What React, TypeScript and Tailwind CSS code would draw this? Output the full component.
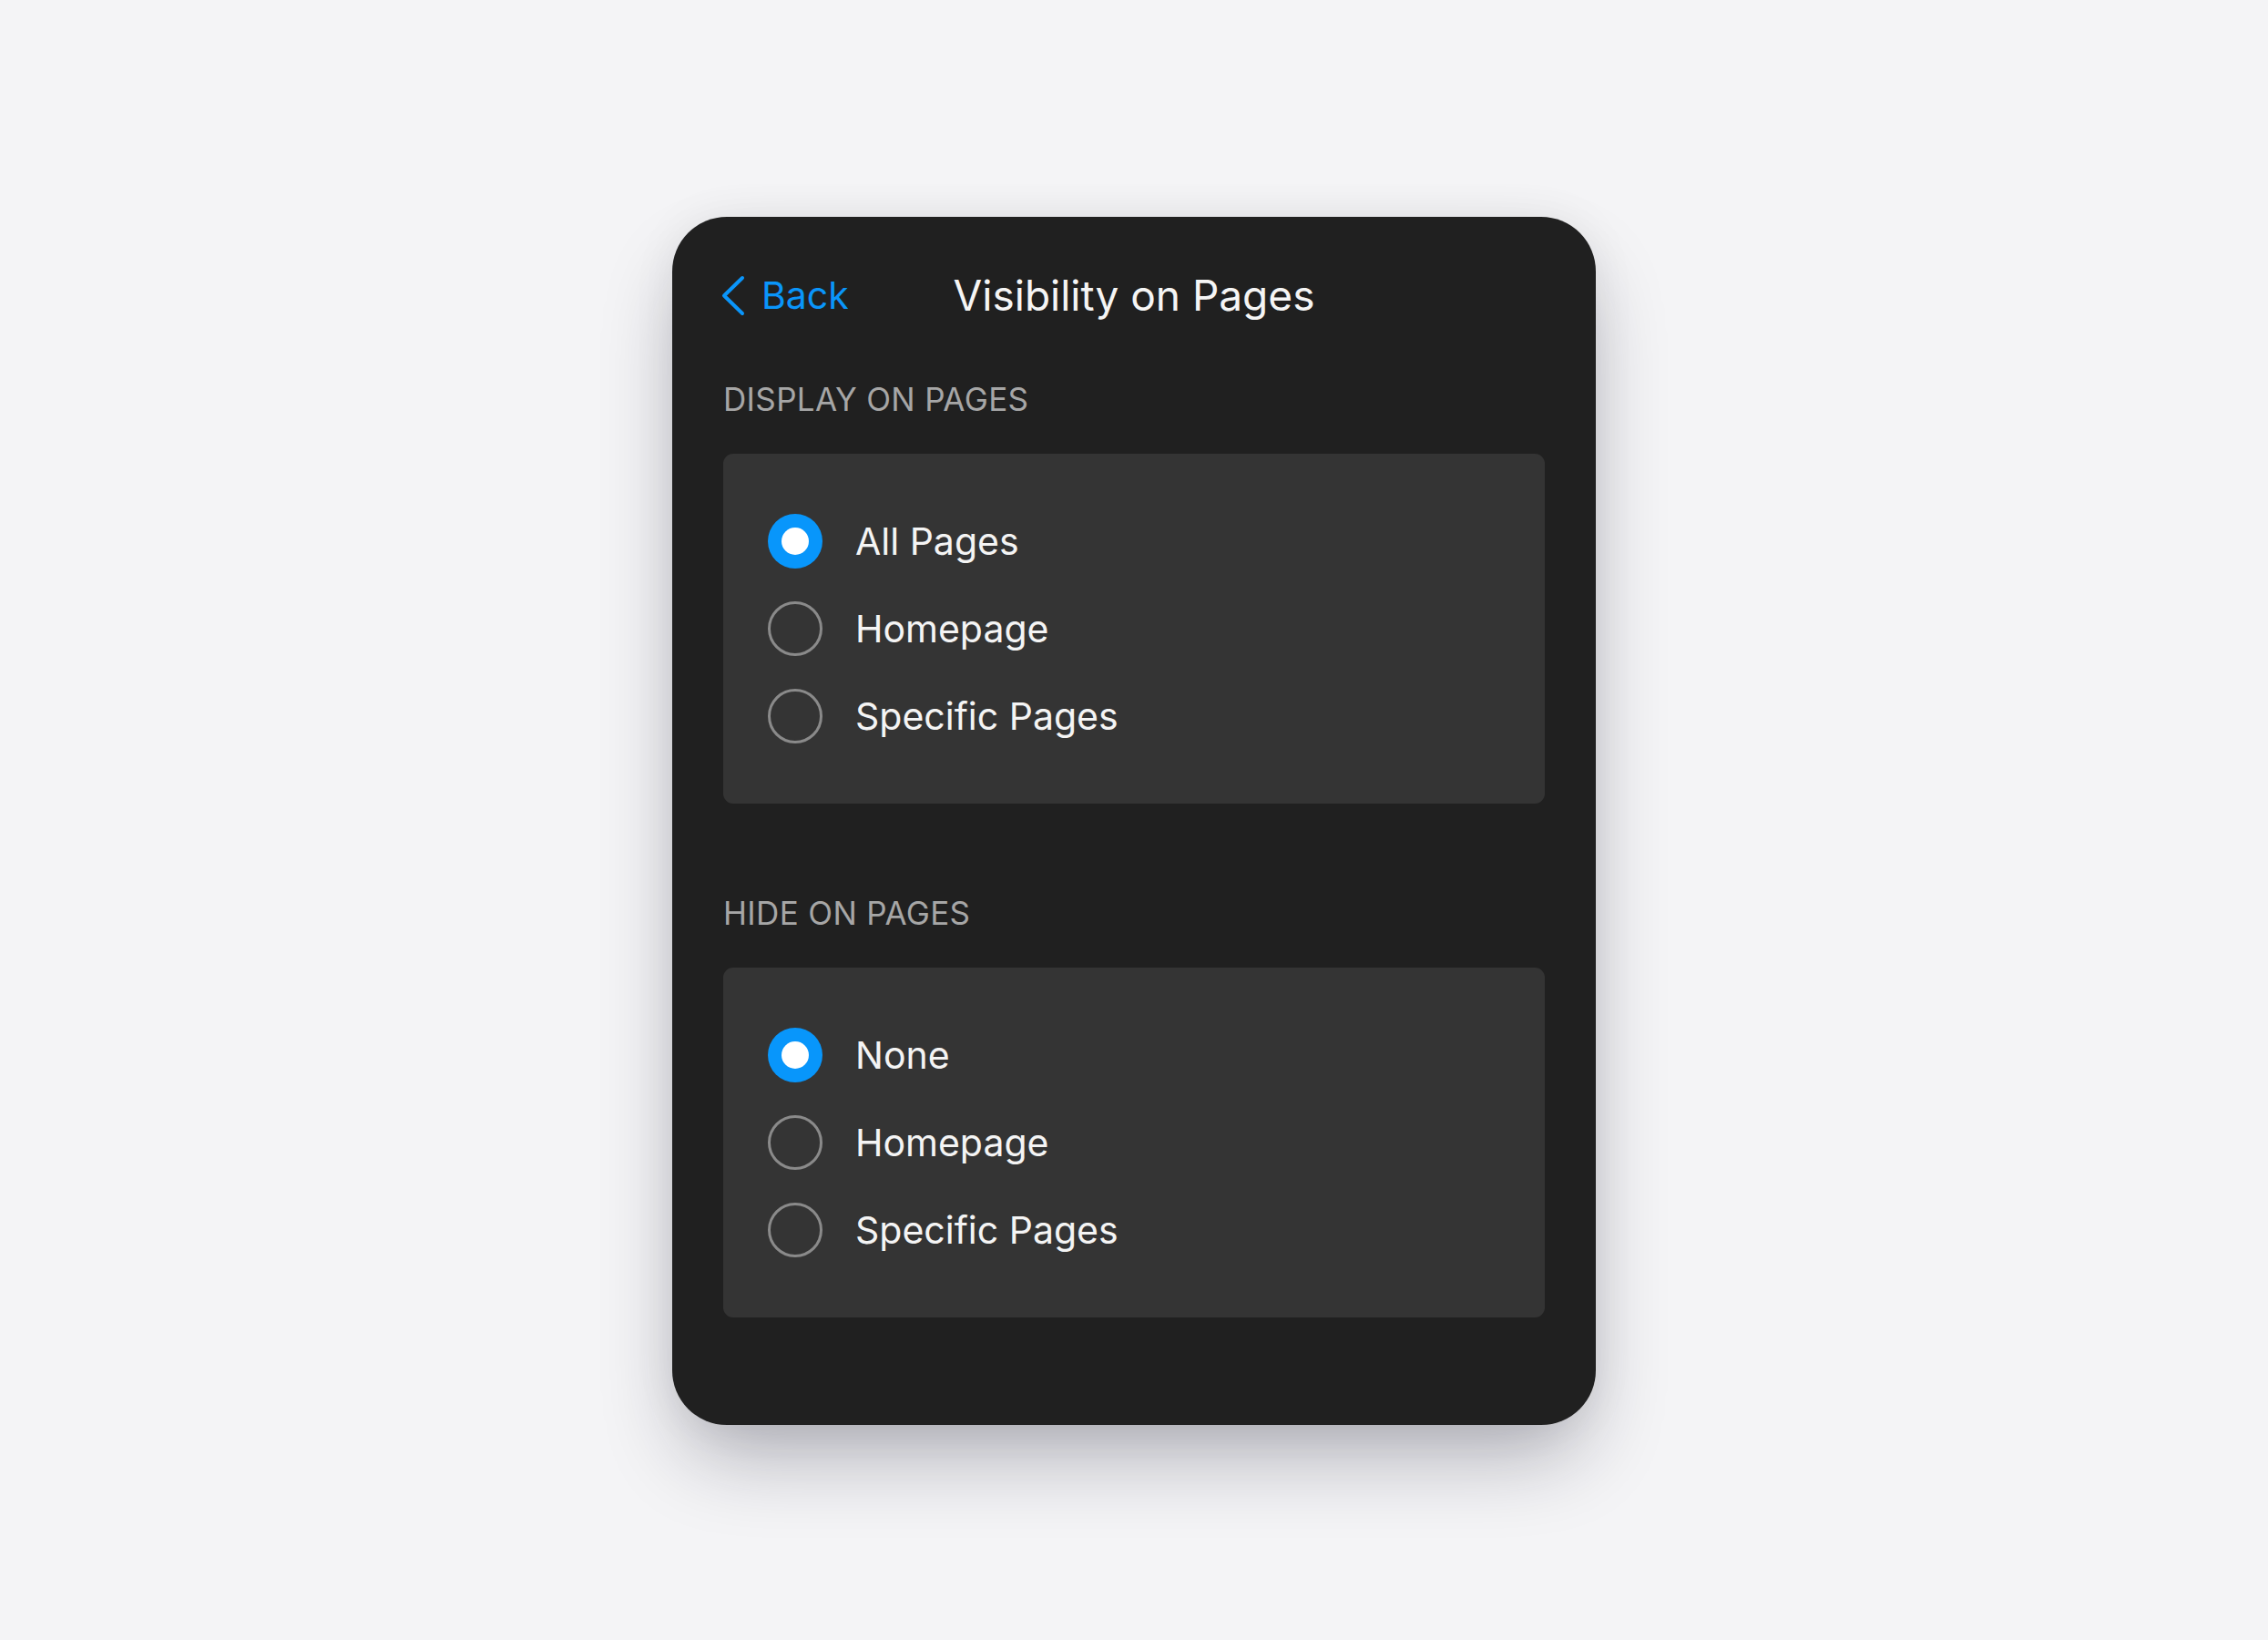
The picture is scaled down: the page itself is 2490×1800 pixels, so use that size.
import React from "react";

type Option = { label: string; selected: boolean };

function Radio({ selected }: { selected: boolean }) {
  if (selected) {
    return (
      <div className="flex h-[60px] w-[60px] shrink-0 items-center justify-center rounded-full bg-[#0896fb]">
        <div className="h-[30px] w-[30px] rounded-full bg-white" />
      </div>
    );
  }
  return <div className="h-[60px] w-[60px] shrink-0 rounded-full border-[3px] border-[#8a8a8a]" />;
}

function Section({ title, options, top }: { title: string; options: Option[]; top: string }) {
  return (
    <div className={top}>
      <div className="text-[35px] leading-[35px] tracking-[0.35px] text-[#a6a6a6]">{title}</div>
      <div className="mt-[42px] rounded-[11px] bg-[#343434] py-[48px] pl-[49px]">
        {options.map((o) => (
          <div key={o.label} className="flex h-[96px] items-center gap-[36px]">
            <Radio selected={o.selected} />
            <span className="text-[41px] leading-[41px] text-[#f4f4f4]">{o.label}</span>
          </div>
        ))}
      </div>
    </div>
  );
}

export default function App() {
  return (
    <div
      className="flex min-h-screen items-center justify-center bg-[#f4f4f6] pt-[2px]"
      style={{ fontFamily: "Inter, 'Noto Sans', 'Liberation Sans', sans-serif" }}
    >
      <div className="w-[1014px] rounded-[60px] bg-[#202020] px-[56px] pt-[58px] pb-[118px] shadow-[0_45px_90px_-15px_rgba(20,20,40,0.32),0_0_50px_rgba(0,0,0,0.06)]">
        <div className="grid h-[56px] grid-cols-[1fr_auto_1fr] items-center">
          <div className="-ml-[2px] flex items-center gap-[18px] text-[#0a95fa]">
            <svg width="26" height="45" viewBox="0 0 26 45" fill="none">
              <path d="M23 3 L3 22.5 L23 42" stroke="#0a95fa" strokeWidth="4" strokeLinecap="round" strokeLinejoin="round" />
            </svg>
            <span className="text-[41px] leading-[56px]">Back</span>
          </div>
          <div className="text-[46px] leading-[56px] text-[#f5f5f5]">Visibility on Pages</div>
          <div />
        </div>

        <Section
          top="mt-[69px]"
          title="DISPLAY ON PAGES"
          options={[
            { label: "All Pages", selected: true },
            { label: "Homepage", selected: false },
            { label: "Specific Pages", selected: false },
          ]}
        />
        <Section
          top="mt-[103px]"
          title="HIDE ON PAGES"
          options={[
            { label: "None", selected: true },
            { label: "Homepage", selected: false },
            { label: "Specific Pages", selected: false },
          ]}
        />
      </div>
    </div>
  );
}
